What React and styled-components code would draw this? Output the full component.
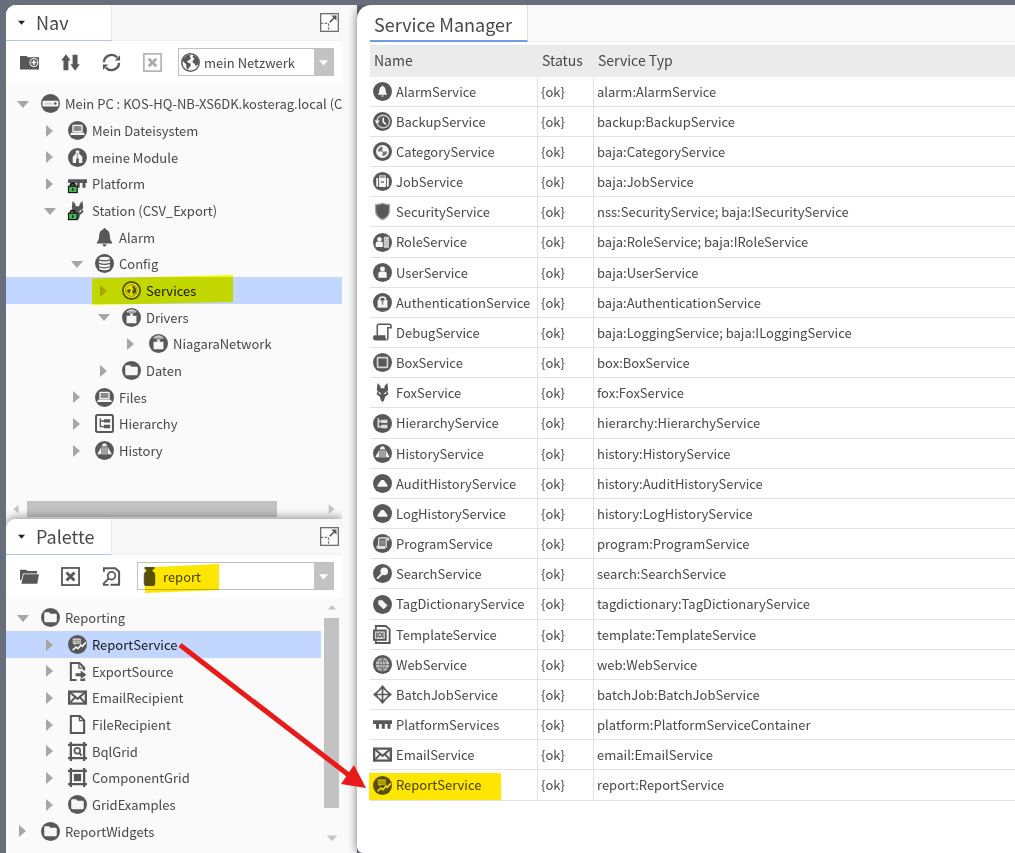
import React from "react";
import styled, { createGlobalStyle, css } from "styled-components";

const ink = "#585858";
const pale = "#f6f6f6";
const line = "#e2e2e2";
const selection = "#c2d6ff";
const marker = "#ffe600";
const brightMarker = "#ffff00";

const GlobalStyle = createGlobalStyle`
  * { box-sizing: border-box; }
  body {
    margin: 0;
    background: #686e7b;
    color: #484848;
    font-family: "Noto Sans CJK SC", "Noto Sans", sans-serif;
    font-size: 13px;
  }
  button, select { font: inherit; color: inherit; }
`;

const Workbench = styled.div`
  position: relative;
  display: grid;
  grid-template-columns: 351px minmax(0, 1fr);
  min-height: 100vh;
  padding: 5px 0 0 6px;
  overflow: hidden;
`;

const Sidebar = styled.aside`
  display: flex;
  flex-direction: column;
  padding-right: 15px;
  background: #fafafa;
  border-radius: 10px 0 0 4px;
`;

const Panel = styled.section`
  display: flex;
  flex-direction: column;
  flex: ${(p) => (p.$grow ? "1 0 auto" : "none")};
  background: #fafafa;
  border-radius: 10px 0 0 0;
  ${(p) => p.$raised && css`box-shadow: 0 -2px 8px rgba(0, 0, 0, 0.4);
    clip-path: inset(-12px 0 0 0);`}
`;

const PanelHeader = styled.header`
  display: flex;
  align-items: center;
  justify-content: space-between;
  height: 36px;
  padding-right: 3px;
  background: #f8f8f8;
  border-bottom: 1px solid #f0f0f0;
  border-radius: 10px 0 0 0;
`;

const PanelTab = styled.button`
  display: flex;
  align-items: center;
  gap: 11px;
  width: 106px;
  height: 36px;
  padding: 0 0 0 12px;
  border: 0;
  border-right: 1px solid #e9e9e9;
  border-bottom: 1px solid #a9c6f5;
  border-radius: 10px 0 0 0;
  background: #fff;
  font-size: 18px;
  line-height: 36px;
`;

const IconButton = styled.button`
  display: grid;
  place-items: center;
  width: 20px;
  height: 20px;
  padding: 0;
  border: 0;
  background: none;
`;

const Toolbar = styled.div`
  display: flex;
  align-items: center;
  gap: 21px;
  height: 42px;
  padding: 0 8px 0 13px;
  background: #fff;
`;

const Combo = styled.label`
  position: relative;
  display: flex;
  align-items: center;
  flex: 1;
  height: 28px;
  margin-left: -5px;
  border: 1px solid #c0c0c0;
  background: #fff;
`;

const ComboIcon = styled.span`
  display: grid;
  place-items: center;
  width: 23px;
`;

const ComboSelect = styled.select`
  flex: 1;
  min-width: 0;
  height: 26px;
  padding: 0 0 0 2px;
  border: 0;
  appearance: none;
  background: none;
`;

const ComboArrow = styled.span`
  display: grid;
  place-items: center;
  width: 19px;
  height: 26px;
  background: #c3c3c3;
`;

const Highlight = styled.span`
  position: absolute;
  top: ${(p) => p.$top}px;
  left: ${(p) => p.$left}px;
  width: ${(p) => p.$width}px;
  height: ${(p) => p.$height}px;
  background: ${(p) => (p.$bright ? brightMarker : marker)};
  mix-blend-mode: multiply;
  pointer-events: none;
  ${(p) => p.$slant && css`clip-path: polygon(0 12%, 100% 0, 100% 90%, 0 100%);`}
`;

const TreeArea = styled.div`
  display: flex;
  flex: 1;
`;

const Tree = styled.ul`
  flex: 1;
  min-width: 0;
  margin: 0;
  padding: 7px 0 8px;
  list-style: none;
  overflow: hidden;
`;

const TreeRow = styled.li`
  position: relative;
  display: flex;
  align-items: center;
  height: 27px;
  padding-left: ${(p) => 11 + p.$depth * 27}px;
  background: ${(p) => (p.$selected ? selection : "none")};
  color: ${(p) => (p.$selected ? "#161616" : "inherit")};
  white-space: nowrap;
  &:nth-child(3n) { height: 26px; }
`;

const Toggle = styled.button`
  display: grid;
  place-items: center;
  width: 12px;
  height: 16px;
  margin-right: 12px;
  padding: 0;
  border: 0;
  background: none;
  visibility: ${(p) => (p.$hidden ? "hidden" : "visible")};
`;

const RowLabel = styled.span`
  margin-left: 5px;
`;

const HorizontalScroll = styled.div`
  display: flex;
  align-items: center;
  gap: 6px;
  height: 18px;
  margin-top: 29px;
  padding: 0 5px 2px;
`;

const VerticalScroll = styled.div`
  display: flex;
  flex-direction: column;
  align-items: center;
  gap: 6px;
  width: 21px;
  padding: 5px 3px 10px;
`;

const Track = styled.div`
  display: flex;
  flex: 1;
  align-self: stretch;
  align-items: stretch;
  flex-direction: ${(p) => (p.$vertical ? "column" : "row")};
`;

const Thumb = styled.div`
  flex: 0 0 ${(p) => p.$share}%;
  background: #c2c2c2;
`;

const Manager = styled.main`
  padding: 0 0 16px 13px;
  background: #fff;
  border-radius: 14px 0 0 6px;
  box-shadow: -1px 0 8px rgba(0, 0, 0, 0.45);
  clip-path: inset(0 0 0 -16px);
`;

const ManagerTabs = styled.div`
  display: flex;
  height: 37px;
  margin-bottom: 3px;
`;

const ManagerTab = styled.h1`
  width: 158px;
  margin: 0;
  padding-left: 4px;
  border-right: 1px solid ${line};
  border-bottom: 2px solid #6f9ce8;
  font-size: 18px;
  font-weight: 400;
  line-height: 38px;
  white-space: nowrap;
`;

const TabFiller = styled.div`
  flex: 1;
  background: #f9f9f9;
  border-bottom: 1px solid #eee;
`;

const Table = styled.table`
  width: 100%;
  table-layout: fixed;
  border-spacing: 0;
  border-collapse: separate;
`;

const HeadCell = styled.th`
  width: ${(p) => p.$width || "auto"};
  height: 32px;
  padding: 0 4px 2px;
  background: #ebebeb;
  font-size: 14px;
  font-weight: 400;
  line-height: 20px;
  text-align: left;
`;

const ServiceRow = styled.tr`
  height: 30px;
  &:nth-child(6n) { height: 31px; }
`;

const Cell = styled.td`
  position: relative;
  padding: 0 3px;
  border-bottom: 1px solid ${line};
  border-right: ${(p) => (p.$last ? "0" : `1px solid ${line}`)};
  line-height: 20px;
  white-space: nowrap;
`;

const ServiceName = styled.div`
  display: flex;
  align-items: center;
  gap: 4px;
`;

const Callout = styled.svg`
  position: absolute;
  top: 0;
  left: 0;
  pointer-events: none;
`;

const Glyph = styled.svg`
  display: block;
  flex: none;
  width: 19px;
  height: 19px;
  overflow: visible;
`;

const Disc = () => <circle cx="10" cy="10" r="10" fill={ink} />;

const fox = (
  <path
    fillRule="evenodd"
    fill={ink}
    d="M4.8 0 L7.6 3 L8.2 5.6 H11.8 L12.4 3 L15.2 0 L16 7 L15 9 L16.4 11.5 L12.8 14.5 L11.6 18.5 L10 20 L8.4 18.5 L7.2 14.5 L3.6 11.5 L5 9 L4 7 Z M5.8 8.6 L9 11.8 L6.4 11.6 Z M14.2 8.6 L11 11.8 L13.6 11.6 Z"
  />
);
const platform = (
  <path fill={ink} d="M0 5.5 H20 V9.5 H18.4 V14.5 H15.2 V9.5 H12.4 V14.5 H9.2 V9.5 H6.4 V14.5 H3.2 V9.5 H0 Z" />
);
const lock = (
  <g>
    <path d="M2.5 14 V12.5 Q2.5 9.7 5 9.7 Q7.5 9.7 7.5 12.5 V14" fill="none" stroke="#111" strokeWidth="1.6" />
    <rect x="0.5" y="12.8" width="9.2" height="6.8" fill="#43b559" stroke="#111" strokeWidth="1.2" />
    <path d="M5 15 V17.6" stroke="#111" strokeWidth="1.4" />
  </g>
);
const pyramid = (
  <>
    <Disc />
    <path d="M8.6 2.6 H11.4 L17.6 14 H2.4 Z" fill={pale} />
    <path d="M7.6 6 H12.4 V14 H7.6 Z" fill="#a0a0a0" />
    <path d="M7 5.4 V14 M13 5.4 V14 M7 6 H13" stroke={ink} strokeWidth=".8" fill="none" />
  </>
);
const smallPyramid = (
  <>
    <Disc />
    <path d="M8.7 6.3 H11.3 L15.2 11.6 V13.4 H4.8 V11.6 Z" fill={pale} />
  </>
);
const laptop = (
  <>
    <Disc />
    <rect x="5.2" y="4.6" width="9.6" height="6.6" rx=".6" fill="#8a8a8a" stroke={pale} strokeWidth="1.4" />
    <path d="M3.6 12 H16.4 L18 14.8 H2 Z" fill={pale} />
  </>
);
const driver = (
  <>
    <Disc />
    <path d="M5 4.4 Q10 -.4 15 4.4" fill="none" stroke="#d8d8d8" strokeWidth="1.5" />
    <path d="M7.2 5.2 Q10 2.6 12.8 5.2" fill="none" stroke="#c8c8c8" strokeWidth="1.3" />
    <path d="M4.8 8.2 H8.7 V5.6 H11.3 V8.2 H15.2 V16 H4.8 Z" fill={pale} />
  </>
);
const folderDisc = (
  <>
    <Disc />
    <path d="M3.4 5.8 Q3.4 4.6 4.6 4.6 H8.6 L9.8 6 H15.4 Q16.6 6 16.6 7.2 V13.8 Q16.6 15 15.4 15 H4.6 Q3.4 15 3.4 13.8 Z" fill={pale} />
  </>
);
const report = (
  <>
    <Disc />
    <path d="M5 3.8 H13.4 V9.2 H8.6 L6.6 11 V9.2 H5 Z" fill="#dcdcdc" />
    <path d="M5.6 5.6 H12.8 M5.6 7.5 H12.8" stroke={ink} strokeWidth=".7" />
    <path d="M4.8 15.8 L8.6 12.8 L10.5 14.4 L13.6 10.6 L15 12 L18.8 7.8" fill="none" stroke={pale} strokeWidth="1.7" />
  </>
);
const mail = (
  <>
    <rect x="0" y="2.6" width="20" height="15" fill={ink} />
    <rect x="2.4" y="5" width="15.2" height="10.2" fill={pale} />
    <path d="M2 4.4 L10 11.4 L18 4.4 M2.2 15.4 L7.4 9.8 M17.8 15.4 L12.6 9.8" fill="none" stroke={ink} strokeWidth="2.1" />
  </>
);
const bell = "M10 0 Q11.3 0 11.4 1.5 Q15.6 2.8 15.6 8 Q15.6 13 18 15 V16.2 H2 V15 Q4.4 13 4.4 8 Q4.4 2.8 8.6 1.5 Q8.7 0 10 0 Z M7.8 17.2 H12.2 Q11.8 19.6 10 19.6 Q8.2 19.6 7.8 17.2 Z";
const gridFrame = (
  <path d="M0 3 H20 M0 17 H20 M3 0 V20 M17 0 V20" stroke={ink} strokeWidth="2.4" fill="none" />
);

const icons = {
  pc: (
    <>
      <Disc />
      <rect x="1.6" y="7" width="16.8" height="6.2" rx="1.2" fill={pale} />
      <rect x="3.6" y="9" width="8.4" height="2.2" fill="#cfcfcf" />
      <circle cx="15" cy="10" r="1.4" fill={ink} />
    </>
  ),
  laptop,
  module: (
    <>
      <Disc />
      <path d="M8.2 2.6 H11.8 V6 L15 9.2 V15.8 H5 V9.2 L8.2 6 Z" fill={pale} />
      <path d="M10 5 V11" stroke="#a4a4a4" strokeWidth="1.4" />
      <path d="M8.6 11 H11.4 V16.4 H8.6 Z" fill={ink} />
    </>
  ),
  platform,
  platformLock: <>{platform}{lock}</>,
  foxLock: <>{fox}{lock}</>,
  fox,
  bell: <path d={bell} fill={ink} />,
  database: (
    <>
      <Disc />
      <path d="M4.2 5.6 Q4.2 3 10 3 Q15.8 3 15.8 5.6 V14.4 Q15.8 17 10 17 Q4.2 17 4.2 14.4 Z" fill={pale} />
      <path d="M4.2 6.2 Q10 8.4 15.8 6.2 M4.2 9.8 Q10 12 15.8 9.8 M4.2 13.4 Q10 15.6 15.8 13.4" stroke={ink} strokeWidth="1.3" fill="none" />
    </>
  ),
  services: (
    <>
      <circle cx="10" cy="10" r="9" fill={pale} stroke={ink} strokeWidth="2" />
      <circle cx="10" cy="10" r="6.2" fill="#ddd" stroke="#888" strokeWidth="1" />
      <path d="M4.8 9.8 L8.2 8.4 L9.6 9.8 L8.2 11.2 L8.4 13.6 L6.4 12.2 Z M10.6 5.4 L12.4 5 L15 8.2 L14.8 12 L12 14.6 L10.6 11.4 L12 8.6 Z" fill={ink} />
    </>
  ),
  driver,
  folderDisc,
  hierarchyBox: (
    <>
      <rect x="1.1" y="1.1" width="17.8" height="17.8" rx="1.4" fill="none" stroke={ink} strokeWidth="2.1" />
      <path d="M5.6 4.6 V13.2 H10 M5.6 7.4 H10" fill="none" stroke={ink} strokeWidth="1.4" />
      <path d="M9.5 5.4 H16 V9 H9.5 Z M9.5 11.4 H16 V15 H9.5 Z" fill={ink} />
    </>
  ),
  pyramid,
  smallPyramid,
  report,
  exportPage: (
    <>
      <path d="M9 19 H3 V1 H12 L17 6 V9 M17 17 V19 H13" fill="none" stroke={ink} strokeWidth="2.2" />
      <path d="M11.5 1.5 V6.5 H16.5" fill="none" stroke={ink} strokeWidth="1.4" />
      <path d="M8 11.8 H13.4 V9 L19.4 13.4 L13.4 17.8 V15 H8 Z" fill={ink} />
    </>
  ),
  mail,
  page: (
    <>
      <path d="M3 1.1 H12.5 L17 5.6 V18.9 H3 Z" fill="none" stroke={ink} strokeWidth="2.2" />
      <path d="M12 1.5 V6 H16.5" fill="none" stroke={ink} strokeWidth="1.3" />
    </>
  ),
  gridSearch: (
    <>
      {gridFrame}
      <circle cx="9.8" cy="9.2" r="3" fill="none" stroke={ink} strokeWidth="1.8" />
      <path d="M12 11.6 L14.4 14.2" stroke={ink} strokeWidth="2" />
    </>
  ),
  gridBox: (
    <>
      {gridFrame}
      <rect x="6.2" y="6.2" width="7.6" height="7.6" fill={ink} />
    </>
  ),
  alarm: (
    <>
      <Disc />
      <path d={bell} fill={pale} transform="translate(4 3.8) scale(.6)" />
    </>
  ),
  backup: (
    <>
      <Disc />
      <circle cx="10.8" cy="10" r="6.6" fill="none" stroke="#cfcfcf" strokeWidth="1.5" />
      <path d="M1.6 9 H7.2 L4.4 12.6 Z" fill={pale} />
      <path d="M10.8 6 V10.4 L13.6 13" fill="none" stroke={pale} strokeWidth="1.7" />
    </>
  ),
  category: (
    <>
      <Disc />
      <circle cx="10" cy="10" r="6.8" fill={pale} />
      <path d="M10 10 V5 A5 5 0 0 0 5 10 Z M10 10 H15 A5 5 0 0 1 10 15 Z" fill="#777" />
    </>
  ),
  job: (
    <>
      <Disc />
      <path d="M7.2 6 V4 H12.8 V6" fill="none" stroke="#d0d0d0" strokeWidth="1.3" />
      <path d="M3.4 6.4 H5.4 V15.2 H3.4 Z M6.4 5.8 H13.6 V15.8 H6.4 Z M14.6 6.4 H16.6 V15.2 H14.6 Z" fill={pale} />
      <path d="M8.4 10.6 H11.6" stroke={ink} strokeWidth="1.4" />
    </>
  ),
  shield: (
    <>
      <path d="M10 .5 Q13 2.2 18 2 V9.5 Q18 16 10 19.5 Q2 16 2 9.5 V2 Q7 2.2 10 .5 Z" fill="#a8a8a8" />
      <path d="M10 2.2 Q13 3.6 16.6 3.4 V9.5 Q16.6 15 10 18 Q3.4 15 3.4 9.5 V3.4 Q7 3.6 10 2.2 Z" fill={ink} />
    </>
  ),
  role: (
    <>
      <Disc />
      <circle cx="6.8" cy="6.6" r="2.3" fill={pale} />
      <path d="M2.8 14.8 V11.2 Q2.8 9 5 9 H8.6 Q10.4 9 10.4 11 V14.8 Z" fill={pale} />
      <path d="M11.4 4 H16.8 V15.6 H11.4 Z" fill="#cfcfcf" />
      <path d="M11.4 6.6 H16.8 M11.4 9.4 H16.8 M11.4 12.2 H16.8" stroke="#b0b0b0" strokeWidth=".8" />
    </>
  ),
  user: (
    <>
      <Disc />
      <circle cx="10" cy="6.2" r="2.6" fill={pale} />
      <path d="M5.6 15.4 V11.4 Q5.6 9 8 9 H12 Q14.4 9 14.4 11.4 V15.4 Z" fill={pale} />
    </>
  ),
  auth: (
    <>
      <Disc />
      <path d="M6.8 9 V6.8 Q6.8 4.2 10 4.2 Q13.2 4.2 13.2 6.8 V9" fill="none" stroke={pale} strokeWidth="1.7" />
      <path d="M4.8 7.6 H15.2 V15.4 H4.8 Z" fill={pale} />
      <path d="M8 7.4 H12 L10.8 9.4 V12.4 H9.2 V9.4 Z" fill="#8a8a8a" />
    </>
  ),
  scroll: (
    <>
      <path d="M4.5 13 V3.2 Q4.5 1.4 6.3 1.4 H17 Q19 1.4 19 3.4 V5 H15.6 V16 Q15.6 17.6 14 17.6" fill="none" stroke={ink} strokeWidth="1.6" />
      <path d="M2 13 H13.2 Q12 15 14 18.4 H3 Q0 18.4 0 15.6 Q0 13 2 13 Z" fill={ink} />
    </>
  ),
  box: (
    <>
      <Disc />
      <rect x="4.8" y="4.8" width="10.4" height="10.4" rx=".6" fill={ink} stroke="#d4d4d4" strokeWidth="1.8" />
    </>
  ),
  hierarchy: (
    <>
      <Disc />
      <path d="M5.6 4.5 V13.4 H9 M5.6 7.8 H9" fill="none" stroke="#ddd" strokeWidth="1.7" />
      <path d="M8.6 6 H15.2 V9.4 H8.6 Z M8.6 11.4 H15.2 V15 H8.6 Z" fill="#ddd" />
    </>
  ),
  program: (
    <>
      <Disc />
      <path d="M6 13 V5.2 Q6 4.2 7 4.2 H15 Q16.6 4.2 16.6 6 H13.8 V14.8" fill="none" stroke="#ddd" strokeWidth="1.5" />
      <path d="M7.6 6.4 H12.4 V11.4 H7.6 Z" fill="#8b8b8b" />
      <path d="M3.6 12.4 H12.6 V15.8 H5.2 Q3 15.2 3.6 12.4 Z" fill="#ddd" />
    </>
  ),
  search: (
    <>
      <Disc />
      <circle cx="11.8" cy="7.8" r="4" fill={pale} />
      <path d="M9.4 10.4 L4.4 15.4" stroke={pale} strokeWidth="2.2" />
    </>
  ),
  tag: (
    <>
      <Disc />
      <path d="M5.6 5.6 H9.8 L15.2 11 L11.2 15 L5.6 9.8 Z" fill={pale} />
    </>
  ),
  template: (
    <>
      <path d="M3 5 V1 H13.5 L17.5 4.6 V19 H3 V16" fill="none" stroke={ink} strokeWidth="2" />
      <rect x="1" y="5.8" width="12.4" height="9.8" fill="#e0e0e0" stroke={ink} strokeWidth="2" />
      <path d="M3.6 8 V13 L5.4 10.8 L7 13 L8.8 10.8 L10.6 13 V8 M3.6 8 L5.4 10 L7 8 L8.8 10 L10.6 8" fill="none" stroke="#777" strokeWidth="1.2" />
    </>
  ),
  web: (
    <>
      <Disc />
      <circle cx="10" cy="10" r="7" fill="#c4c4c4" />
      <path d="M3 10 H17 M4.2 6.4 H15.8 M4.2 13.6 H15.8 M10 3 V17 M10 3 Q3.6 10 10 17 M10 3 Q16.4 10 10 17" fill="none" stroke="#6c6c6c" strokeWidth=".9" />
    </>
  ),
  batch: (
    <>
      <path d="M10 2 L18 10 L10 18 L2 10 Z M10 2 V18 M2 10 H18" fill="none" stroke={ink} strokeWidth="1.8" />
      <path d="M6.8 4 L10 0 L13.2 4 Z M6.8 16 L10 20 L13.2 16 Z M4 6.8 L0 10 L4 13.2 Z M16 6.8 L20 10 L16 13.2 Z" fill={ink} />
    </>
  ),
  newFolder: (
    <>
      <path d="M0 3.2 H7 L8.4 4.6 H20 V17.4 H0 Z" fill={ink} />
      <circle cx="14.6" cy="10" r="4.7" fill={pale} />
      <circle cx="14.6" cy="10" r="3.6" fill={ink} />
      <path d="M14.6 7.4 V12.6 M12 10 H17.2" stroke={pale} strokeWidth="1.6" />
    </>
  ),
  upDown: (
    <path d="M5.2 1.4 L10.2 8 H7.8 V18.2 H2.6 V8 H.2 Z M12.2 1.8 H17.4 V11.8 H19.8 L14.8 18.8 L9.8 11.8 H12.2 Z" fill={ink} />
  ),
  refresh: (
    <>
      <path d="M2 9.6 A8 8 0 0 1 16 4.8" fill="none" stroke={ink} strokeWidth="2.4" />
      <path d="M18 10.4 A8 8 0 0 1 4 15.2" fill="none" stroke={ink} strokeWidth="2.4" />
      <path d="M13.4 7.8 H19 V2.4 Z M6.6 12.2 H1 V17.6 Z" fill={ink} />
    </>
  ),
  closeOff: (
    <>
      <rect x=".9" y=".9" width="18.2" height="18.2" fill="none" stroke="#b4b4b4" strokeWidth="1.8" />
      <path d="M6 6 L14 14 M14 6 L6 14" stroke="#ababab" strokeWidth="2.9" />
    </>
  ),
  close: (
    <>
      <rect x="1" y="1" width="18" height="18" fill="none" stroke={ink} strokeWidth="1.9" />
      <path d="M5.8 5.8 L14.2 14.2 M14.2 5.8 L5.8 14.2" stroke={ink} strokeWidth="3" />
    </>
  ),
  openFolder: (
    <>
      <path d="M0 2.8 H6.6 L8 4.2 H18 V6.8 H3.2 L1.4 14 H0 Z" fill={ink} />
      <path d="M3.8 7.6 H20 L18.2 17.6 H1.4 Z" fill={ink} />
    </>
  ),
  findPage: (
    <>
      <path d="M2 5 V1.4 H14 L18 5 V18.8 H9" fill="none" stroke={ink} strokeWidth="2.1" />
      <circle cx="10" cy="9.2" r="4" fill="none" stroke={ink} strokeWidth="1.9" />
      <path d="M7.2 12 L1.2 18 M1 18.8 H7" stroke={ink} strokeWidth="2" />
    </>
  ),
  globe: (
    <>
      <circle cx="10" cy="10" r="9.2" fill="#fff" stroke={ink} strokeWidth="1.5" />
      <path d="M2 6.4 L6.2 2.4 L10 2.2 L9.4 4.4 L10.6 5.6 L8.2 8 L6.4 8.4 L7.2 10 L10.4 11.2 L10 14 L8 15.8 L7.4 18.2 L5.6 15 L5.4 11.8 L2.4 9.2 Z M12.8 2.2 L16.6 4.4 L18.8 8.2 L18.4 12.6 L16.8 12.4 L15.8 14.6 L14.2 11 L12.2 10.2 L12.6 7.4 L14.6 6.4 L12.2 4.6 Z" fill={ink} />
    </>
  ),
  bottle: (
    <path d="M4.8 0 H15.2 V2.6 H13.2 V4.6 Q16 5.4 16 8 V17.6 Q16 20 13.6 20 H6.4 Q4 20 4 17.6 V8 Q4 5.4 6.8 4.6 V2.6 H4.8 Z" fill={ink} />
  ),
  expand: (
    <>
      <rect x=".7" y=".7" width="18.6" height="18.6" fill="#fcfcfc" stroke="#666" strokeWidth="1.3" />
      <path d="M10.4 9.6 L16.4 3.6" stroke={ink} strokeWidth="1.6" />
      <path d="M11.8 2.6 H17.4 V8.2 Z" fill={ink} />
      <path d="M1 11 H9 V19" fill="none" stroke="#777" strokeWidth="1.3" strokeDasharray="2.6 1.4" />
    </>
  ),
};

const Icon = ({ name }) => (
  <Glyph viewBox="0 0 20 20" aria-hidden="true">
    {icons[name]}
  </Glyph>
);

const arrowShapes = {
  down: "0,3 12,3 6,10",
  right: "2,0 9,6 2,12",
  left: "9,1 9,11 3,6",
  up: "1,9 11,9 6,4",
};

const Triangle = ({ to, color = "#a6a6a6", size = 12 }) => (
  <svg width={size} height={size} viewBox="0 0 12 12" aria-hidden="true">
    <polygon points={arrowShapes[to]} fill={color} />
  </svg>
);

function ToolButton({ icon, label }) {
  return (
    <IconButton type="button" aria-label={label}>
      <Icon name={icon} />
    </IconButton>
  );
}

function PanelHead({ title }) {
  return (
    <PanelHeader>
      <PanelTab type="button">
        <Triangle to="down" color="#222" size={7} />
        {title}
      </PanelTab>
      <ToolButton icon="expand" label={`Expand ${title}`} />
    </PanelHeader>
  );
}

function Picker({ icon, value, label, mark }) {
  return (
    <Combo>
      <ComboIcon><Icon name={icon} /></ComboIcon>
      <ComboSelect aria-label={label} defaultValue={value}>
        <option>{value}</option>
      </ComboSelect>
      <ComboArrow><Triangle to="down" color="#fff" size={9} /></ComboArrow>
      {mark && <Highlight $slant $top={1} $left={7} $width={74} $height={29} />}
    </Combo>
  );
}

function TreeList({ label, items }) {
  return (
    <Tree role="tree" aria-label={label}>
      {items.map(([depth, state, icon, text, selected, mark]) => (
        <TreeRow key={text} role="treeitem" aria-selected={!!selected} $depth={depth} $selected={selected}>
          <Toggle type="button" aria-label={`Toggle ${text}`} $hidden={!state}>
            <Triangle to={state === "open" ? "down" : "right"} />
          </Toggle>
          <Icon name={icon} />
          <RowLabel>{text}</RowLabel>
          {mark && <Highlight $slant $bright $top={-2} $left={86} $width={141} $height={30} />}
        </TreeRow>
      ))}
    </Tree>
  );
}

const navItems = [
  [0, "open", "pc", "Mein PC : KOS-HQ-NB-XS6DK.kosterag.local (CSV"],
  [1, "shut", "laptop", "Mein Dateisystem"],
  [1, "shut", "module", "meine Module"],
  [1, "shut", "platformLock", "Platform"],
  [1, "open", "foxLock", "Station (CSV_Export)"],
  [2, null, "bell", "Alarm"],
  [2, "open", "database", "Config"],
  [3, "shut", "services", "Services", true, true],
  [3, "open", "driver", "Drivers"],
  [4, "shut", "driver", "NiagaraNetwork"],
  [3, "shut", "folderDisc", "Daten"],
  [2, "shut", "laptop", "Files"],
  [2, "shut", "hierarchyBox", "Hierarchy"],
  [2, "shut", "pyramid", "History"],
];

const paletteItems = [
  [0, "open", "folderDisc", "Reporting"],
  [1, "shut", "report", "ReportService", true],
  [1, "shut", "exportPage", "ExportSource"],
  [1, "shut", "mail", "EmailRecipient"],
  [1, "shut", "page", "FileRecipient"],
  [1, "shut", "gridSearch", "BqlGrid"],
  [1, "shut", "gridBox", "ComponentGrid"],
  [1, "shut", "folderDisc", "GridExamples"],
  [0, "shut", "folderDisc", "ReportWidgets"],
];

const services = [
  ["alarm", "AlarmService", "alarm:AlarmService"],
  ["backup", "BackupService", "backup:BackupService"],
  ["category", "CategoryService", "baja:CategoryService"],
  ["job", "JobService", "baja:JobService"],
  ["shield", "SecurityService", "nss:SecurityService; baja:ISecurityService"],
  ["role", "RoleService", "baja:RoleService; baja:IRoleService"],
  ["user", "UserService", "baja:UserService"],
  ["auth", "AuthenticationService", "baja:AuthenticationService"],
  ["scroll", "DebugService", "baja:LoggingService; baja:ILoggingService"],
  ["box", "BoxService", "box:BoxService"],
  ["fox", "FoxService", "fox:FoxService"],
  ["hierarchy", "HierarchyService", "hierarchy:HierarchyService"],
  ["pyramid", "HistoryService", "history:HistoryService"],
  ["smallPyramid", "AuditHistoryService", "history:AuditHistoryService"],
  ["smallPyramid", "LogHistoryService", "history:LogHistoryService"],
  ["program", "ProgramService", "program:ProgramService"],
  ["search", "SearchService", "search:SearchService"],
  ["tag", "TagDictionaryService", "tagdictionary:TagDictionaryService"],
  ["template", "TemplateService", "template:TemplateService"],
  ["web", "WebService", "web:WebService"],
  ["batch", "BatchJobService", "batchJob:BatchJobService"],
  ["platform", "PlatformServices", "platform:PlatformServiceContainer"],
  ["mail", "EmailService", "email:EmailService"],
  ["report", "ReportService", "report:ReportService", true],
];

export default function App() {
  return (
    <>
      <GlobalStyle />
      <Workbench>
        <Sidebar>
          <Panel>
            <PanelHead title="Nav" />
            <Toolbar>
              <ToolButton icon="newFolder" label="New folder" />
              <ToolButton icon="upDown" label="Sort" />
              <ToolButton icon="refresh" label="Refresh" />
              <ToolButton icon="closeOff" label="Close" />
              <Picker icon="globe" value="mein Netzwerk" label="Network" />
            </Toolbar>
            <TreeList label="Nav" items={navItems} />
            <HorizontalScroll>
              <Triangle to="left" color="#c4c4c4" size={10} />
              <Track><Thumb $share={85} /></Track>
              <Triangle to="right" color="#c4c4c4" size={10} />
            </HorizontalScroll>
          </Panel>
          <Panel $grow $raised>
            <PanelHead title="Palette" />
            <Toolbar>
              <ToolButton icon="openFolder" label="Open palette" />
              <ToolButton icon="close" label="Close palette" />
              <ToolButton icon="findPage" label="Find" />
              <Picker icon="bottle" value="report" label="Palette" mark />
            </Toolbar>
            <TreeArea>
              <TreeList label="Palette" items={paletteItems} />
              <VerticalScroll>
                <Triangle to="up" color="#c4c4c4" size={10} />
                <Track $vertical><Thumb $share={91} /></Track>
                <Triangle to="down" color="#c4c4c4" size={10} />
              </VerticalScroll>
            </TreeArea>
          </Panel>
        </Sidebar>
        <Manager>
          <ManagerTabs>
            <ManagerTab>Service Manager</ManagerTab>
            <TabFiller />
          </ManagerTabs>
          <Table>
            <thead>
              <tr>
                <HeadCell $width="168px">Name</HeadCell>
                <HeadCell $width="56px">Status</HeadCell>
                <HeadCell>Service Typ</HeadCell>
              </tr>
            </thead>
            <tbody>
              {services.map(([icon, name, type, mark]) => (
                <ServiceRow key={name}>
                  <Cell>
                    <ServiceName>
                      <Icon name={icon} />
                      {name}
                    </ServiceName>
                    {mark && <Highlight $top={3} $left={-1} $width={132} $height={27} />}
                  </Cell>
                  <Cell>{"{ok}"}</Cell>
                  <Cell $last>{type}</Cell>
                </ServiceRow>
              ))}
            </tbody>
          </Table>
        </Manager>
        <Callout width="380" height="800" aria-hidden="true">
          <path d="M180 645 L350 776" stroke="#e81a1a" strokeWidth="5" />
          <polygon points="341,784 354,765 366,788" fill="#e81a1a" />
        </Callout>
      </Workbench>
    </>
  );
}
